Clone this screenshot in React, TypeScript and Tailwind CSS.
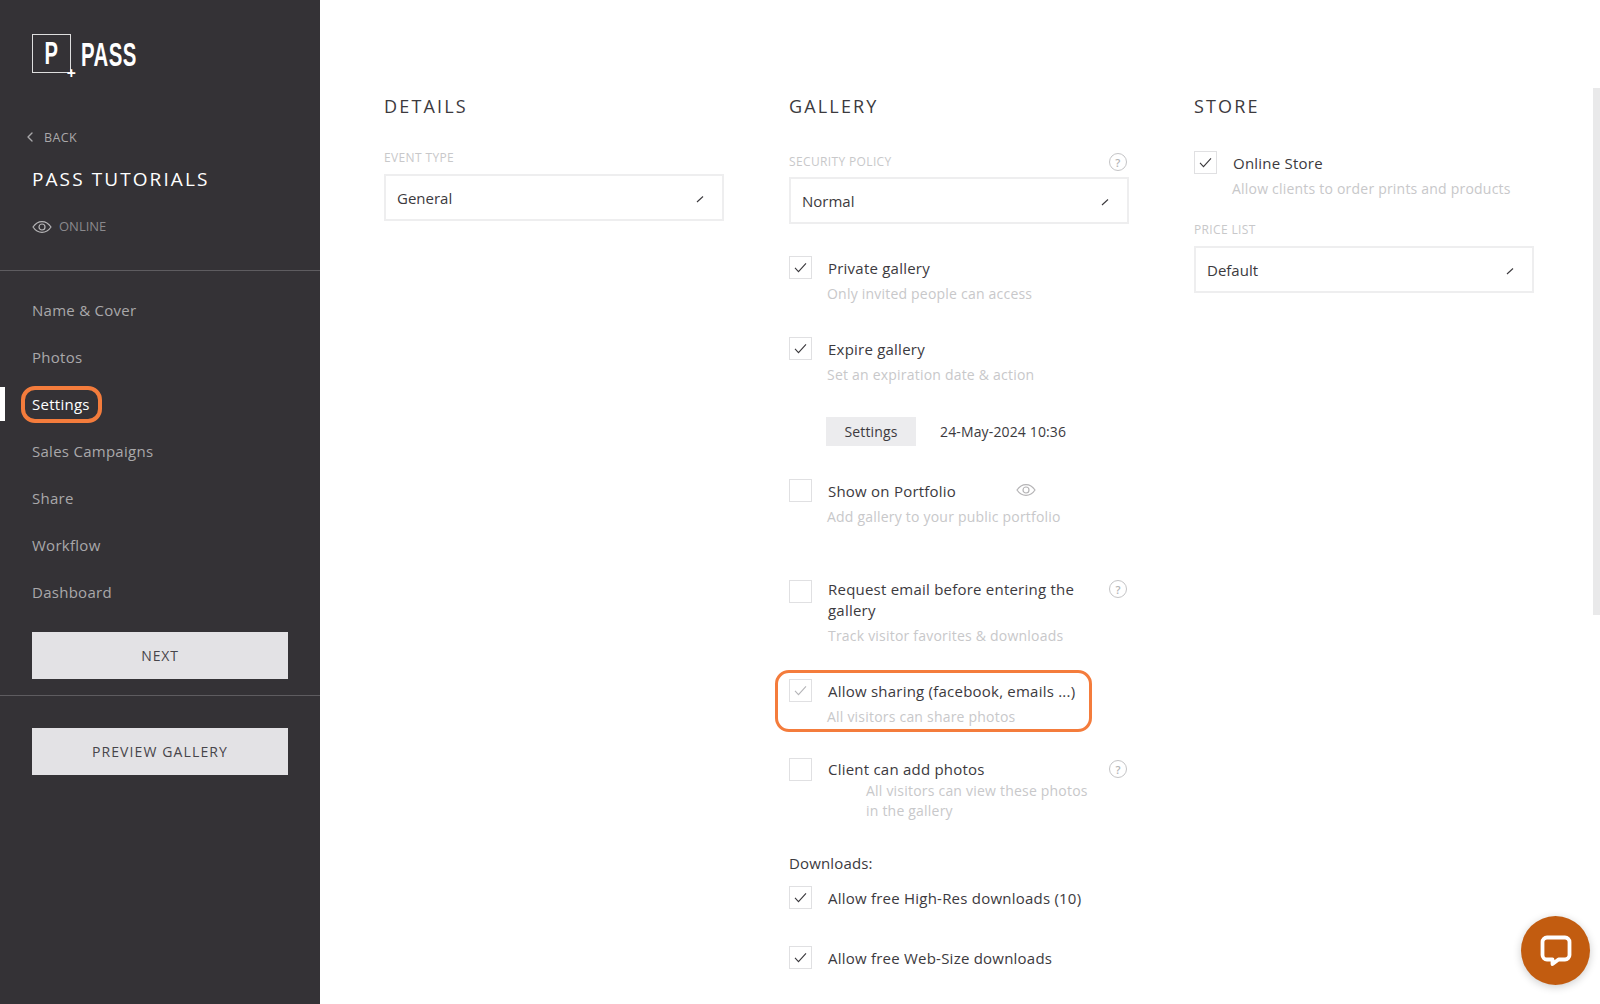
import { ChevronLeft } from "lucide-react";

const navItems = ["Name & Cover", "Photos", "Settings", "Sales Campaigns", "Share", "Workflow", "Dashboard"];

function EyeIcon({ className }: { className: string }) {
  return (
    <svg viewBox="0 0 20 14" fill="none" stroke="currentColor" strokeWidth="1.2" className={className}>
      <path d="M1 7c2.4-3.6 5.4-5.4 9-5.4s6.6 1.8 9 5.4c-2.4 3.6-5.4 5.4-9 5.4S3.400 10.600 1 7z" />
      <circle cx="10" cy="7" r="3" />
    </svg>
  );
}

function Help() {
  return (
    <span className="mr-[2px] flex h-[18px] w-[18px] items-center justify-center rounded-full border-[1.5px] border-[#c4c4c6] text-[11px] font-semibold leading-none text-[#b4b4b6]">
      ?
    </span>
  );
}

function Checkbox({ checked, faded }: { checked?: boolean; faded?: boolean }) {
  return (
    <span className="flex h-[23px] w-[23px] shrink-0 items-center justify-center border border-[#e0e0e2] bg-white">
      {checked && (
        <svg viewBox="0 0 14 12" fill="none" strokeWidth="1.2" className="h-[11px] w-[13px]" stroke={faded ? "#b5b5b8" : "#3a383c"}>
          <path d="M1 6.500 4.800 10.500 13 1.500" />
        </svg>
      )}
    </span>
  );
}

function Select({ value }: { value: string }) {
  return (
    <div className="flex h-[47px] items-center justify-between border-2 border-[#eeeeef] pl-[11px] pr-[18px] pt-[2px] text-[15px] text-[#3c3a3e]">
      <span>{value}</span>
      <svg viewBox="0 0 8 8" className="h-[8px] w-[8px]" stroke="#3a383c" strokeWidth="1.1">
        <path d="M1 7 7 1.500" />
      </svg>
    </div>
  );
}

function Heading({ children }: { children: string }) {
  return <h2 className="h-[22px] text-[18px] leading-[21px] tracking-[0.12em] text-[#3c3a3e]">{children}</h2>;
}

function Option({
  label,
  sub,
  checked,
  faded,
  className,
}: {
  label: string;
  sub?: string;
  checked?: boolean;
  faded?: boolean;
  className: string;
}) {
  return (
    <div className={className}>
      <div className="flex items-start gap-[16px]">
        <Checkbox checked={checked} faded={faded} />
        <span className="pt-[2px] text-[15px] leading-[21px] tracking-[0.015em] text-[#3c3a3e]">{label}</span>
      </div>
      {sub && <p className="mt-[5px] pl-[38px] text-[14px] leading-[20px] tracking-[0.015em] text-[#c8c8ca]">{sub}</p>}
    </div>
  );
}

export default function App() {
  return (
    <div className="relative flex h-screen overflow-hidden bg-white font-['Open_Sans',sans-serif]">
      <aside className="w-[320px] shrink-0 bg-[#343236] text-[#a9a8aa]">
        <div className="h-[271px] border-b border-[#5e5c60] px-[32px] pt-[34px]">
          <div className="flex h-[40px] items-start text-white">
            <div className="relative flex h-[39px] w-[39px] items-center justify-center border-[1.5px] border-[#dedede]">
              <span className="inline-block origin-center scale-x-[0.65] font-['Liberation_Sans',sans-serif] text-[31px] font-bold leading-none">P</span>
              <span className="absolute -bottom-[5px] -right-[6px] text-[16px] font-bold leading-[8px] text-white">+</span>
            </div>
            <span className="ml-[10px] mt-[1px] inline-block origin-left scale-x-[0.6] font-['Liberation_Sans',sans-serif] text-[34px] font-bold leading-[38px] tracking-[0.02em]">
              PASS
            </span>
          </div>
          <div className="-ml-[8px] mt-[54px] flex h-[20px] items-center text-[12.5px] tracking-[0.03em]">
            <ChevronLeft size={16} strokeWidth={2} className="-ml-[2px] mr-[6px] -mt-[2px]" />
            BACK
          </div>
          <div className="mt-[18px] text-[19px] leading-[26px] tracking-[0.11em] text-white">PASS TUTORIALS</div>
          <div className="mt-[25px] flex h-[20px] items-center text-[13px] text-[#8a898c]">
            <EyeIcon className="mr-[7px] h-[14px] w-[20px] text-[#b5b4b6]" />
            ONLINE
          </div>
        </div>
        <nav className="pt-[16px]">
          {navItems.map((item) => (
            <div
              key={item}
              className={
                item === "Settings"
                  ? "relative flex h-[47px] items-center pl-[32px] text-[15px] tracking-[0.018em] text-white"
                  : "flex h-[47px] items-center pl-[32px] text-[15px] tracking-[0.018em]"
              }
            >
              {item === "Settings" && (
                <>
                  <span className="absolute left-0 top-[6px] h-[34px] w-[5px] bg-white" />
                  <span className="absolute left-[21px] top-[5px] h-[37px] w-[81px] rounded-[14px] border-[4px] border-[#f47c3c]" />
                </>
              )}
              {item}
            </div>
          ))}
        </nav>
        <div className="mt-[16px] border-b border-[#5e5c60] px-[32px] pb-[16px]">
          <button className="h-[47px] w-full bg-[#e3e2e5] text-[14px] tracking-[0.06em] text-[#47454a]">NEXT</button>
        </div>
        <div className="px-[32px] pt-[32px]">
          <button className="h-[47px] w-full bg-[#e3e2e5] text-[14px] tracking-[0.08em] text-[#47454a]">PREVIEW GALLERY</button>
        </div>
      </aside>

      <main className="grid flex-1 grid-cols-[340px_340px_340px] gap-x-[65px] pl-[64px] pt-[96px]">
        <section>
          <Heading>DETAILS</Heading>
          <p className="mb-[7px] mt-[31px] text-[12px] leading-[18px] tracking-[0.03em] text-[#c8c8ca]">EVENT TYPE</p>
          <Select value="General" />
        </section>

        <section className="relative">
          <Heading>GALLERY</Heading>
          <div className="mb-[6px] mt-[35px] flex h-[18px] items-center justify-between text-[12px] tracking-[0.03em] text-[#c8c8ca]">
            SECURITY POLICY
            <Help />
          </div>
          <Select value="Normal" />
          <Option className="mt-[32px]" checked label="Private gallery" sub="Only invited people can access" />
          <Option className="mt-[33px]" checked label="Expire gallery" sub="Set an expiration date & action" />
          <div className="mt-[32px] flex items-center pl-[37px]">
            <span className="flex h-[29px] w-[90px] items-center justify-center bg-[#ececee] text-[14px] tracking-[0.01em] text-[#3c3a3e]">Settings</span>
            <span className="ml-[24px] text-[14px] tracking-[0.01em] text-[#3c3a3e]">24-May-2024 10:36</span>
          </div>
          <div className="relative mt-[33px]">
            <Option className="" label="Show on Portfolio" sub="Add gallery to your public portfolio" />
            <EyeIcon className="absolute left-[227px] top-[4px] h-[14px] w-[20px] text-[#b5b4b6]" />
          </div>
          <div className="mt-[53px] flex items-start gap-[16px]">
            <Checkbox />
            <div className="-mt-[1px] w-[265px]">
              <p className="text-[15px] leading-[21px] tracking-[0.015em] text-[#3c3a3e]">Request email before entering the gallery</p>
              <p className="mt-[5px] text-[14px] leading-[20px] tracking-[0.015em] text-[#c8c8ca]">Track visitor favorites & downloads</p>
            </div>
            <span className="ml-auto"><Help /></span>
          </div>
          <div className="relative mt-[33px]">
            <span className="absolute -left-[14px] -top-[9px] h-[62px] w-[317px] rounded-[14px] border-[3.500px] border-[#f47c3c]" />
            <Option className="" checked faded label="Allow sharing (facebook, emails ...)" sub="All visitors can share photos" />
          </div>
          <div className="mt-[31px] flex items-start gap-[16px]">
            <Checkbox />
            <div className="w-[265px]">
              <p className="pt-[1px] text-[15px] leading-[21px] tracking-[0.015em] text-[#3c3a3e]">Client can add photos</p>
              <p className="mt-[1px] pl-[38px] text-[14px] leading-[20px] tracking-[0.015em] text-[#c8c8ca]">All visitors can view these photos in the gallery</p>
            </div>
            <span className="ml-auto mt-[2px]"><Help /></span>
          </div>
          <p className="mt-[32px] text-[15px] leading-[21px] tracking-[0.01em] text-[#3c3a3e]">Downloads:</p>
          <Option className="mt-[12px]" checked label="Allow free High-Res downloads (10)" />
          <Option className="mt-[37px]" checked label="Allow free Web-Size downloads" />
        </section>

        <section>
          <Heading>STORE</Heading>
          <Option className="mt-[33px]" checked label="Online Store" sub="Allow clients to order prints and products" />
          <p className="mb-[7px] mt-[22px] text-[12px] leading-[18px] tracking-[0.03em] text-[#c8c8ca]">PRICE LIST</p>
          <Select value="Default" />
        </section>
      </main>

      <div className="absolute right-0 top-[88px] h-[527px] w-[7px] bg-[#e9e9ea]" />
      <div className="absolute bottom-[19px] right-[10px] flex h-[69px] w-[69px] items-center justify-center rounded-full bg-[#c25c10] shadow-[0_2px_8px_rgba(0,0,0,0.2)]">
        <svg viewBox="0 0 32 32" className="h-[32px] w-[32px]" fill="none" stroke="white" strokeWidth="3.800" strokeLinejoin="round">
          <path d="M7 2.500h18a4.500 4.500 0 0 1 4.500 4.500v13a4.500 4.500 0 0 1-4.500 4.500h-6.500l-6 4.500v-4.500H7A4.500 4.500 0 0 1 2.500 20V7A4.500 4.500 0 0 1 7 2.500z" />
        </svg>
      </div>
    </div>
  );
}
